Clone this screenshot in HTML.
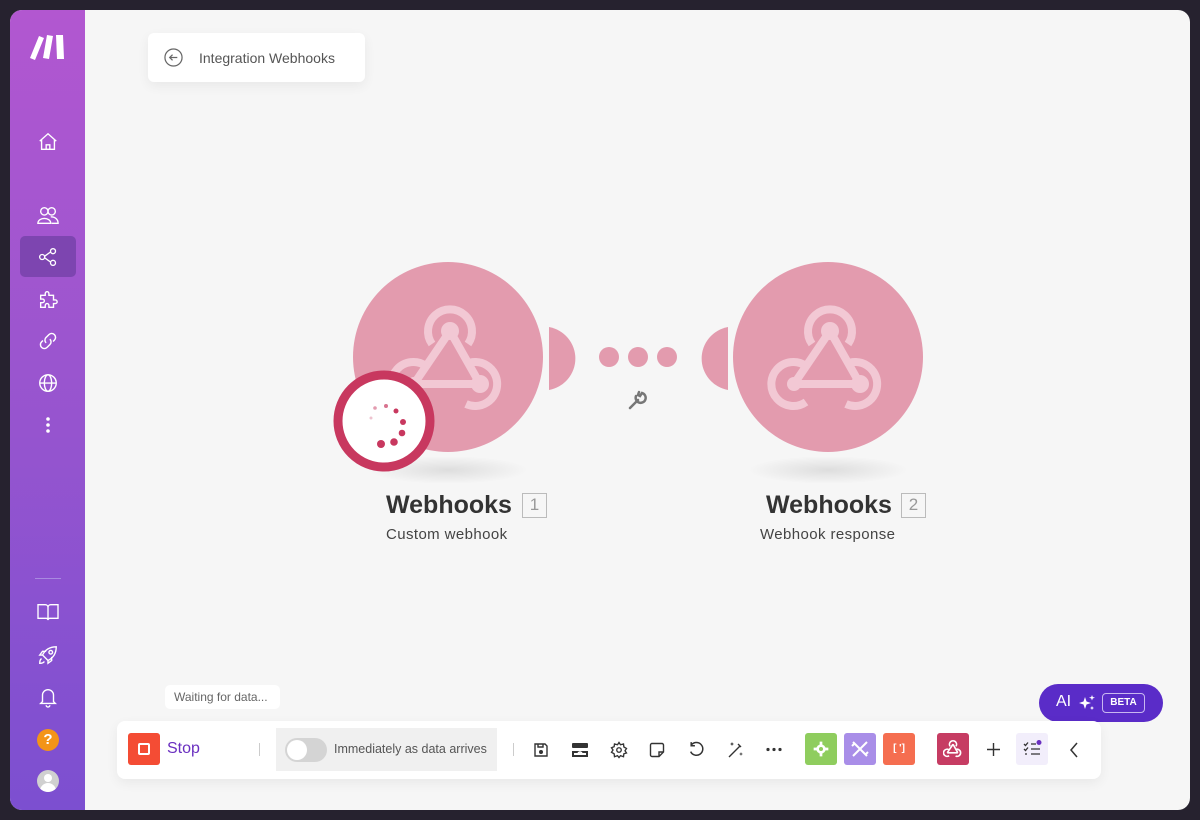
<!DOCTYPE html>
<html><head><meta charset="utf-8"><style>
*{margin:0;padding:0;box-sizing:border-box}
body{width:1200px;height:820px;background:#26222f;font-family:"Liberation Sans",sans-serif;position:relative;overflow:hidden}
.frame{position:absolute;left:10px;top:10px;width:1180px;height:800px;border-radius:12px;overflow:hidden;background:#f6f6f6}
.side{position:absolute;left:0;top:0;width:75px;height:800px;background:linear-gradient(180deg,#b257d0 0%,#9a55cf 45%,#7c4fd0 100%)}
.side svg{position:absolute}
.abs{position:absolute}
.t{position:absolute;white-space:nowrap}
.tb svg{position:absolute}
</style></head><body>
<div class="frame">
<div class="side">
 <svg style="left:20px;top:24px" width="36" height="26" viewBox="0 0 36 26"><path d="M0 24 L9 2 L14 4 L5 26Z M13 24 L17 1 L23 2 L19 25Z M26 1 L33 1 L34 25 L27 25Z" fill="#fff"/></svg>
 <svg style="left:27px;top:121px" width="22" height="22" viewBox="0 0 24 24" fill="none" stroke="#fff" stroke-width="1.5"><path d="M3 11 L12 3 L21 11 M5 9 V20 H19 V9 M10 20 V15 H14 V20"/></svg>
 <svg style="left:27px;top:194px" width="22" height="22" viewBox="0 0 24 24" fill="none" stroke="#fff" stroke-width="1.5"><circle cx="8" cy="8" r="4"/><circle cx="16" cy="8" r="4"/><path d="M1 21 C1 14 15 14 15 21 Z M15 14 C20 14 23 17 23 21 H16"/></svg>
 <div class="abs" style="left:10px;top:226px;width:56px;height:41px;background:#7d45b0;border-radius:5px"></div>
 <svg style="left:28px;top:237px" width="20" height="20" viewBox="0 0 24 24" fill="none" stroke="#fff" stroke-width="1.6"><circle cx="5" cy="12" r="3"/><circle cx="18" cy="5" r="3"/><circle cx="18" cy="19" r="3"/><path d="M8 11 L15 6 M8 13 L15 18"/></svg>
 <svg style="left:27px;top:278px" width="22" height="22" viewBox="0 0 24 24" fill="none" stroke="#fff" stroke-width="1.5"><path d="M4 8 H9 V6 a2 2 0 0 1 4 0 V8 H18 V13 H20 a2 2 0 0 1 0 4 H18 V21 H13 V19 a2 2 0 0 0 -4 0 V21 H4 V16 H6 a2 2 0 0 0 0 -4 H4Z"/></svg>
 <svg style="left:27px;top:320px" width="22" height="22" viewBox="0 0 24 24" fill="none" stroke="#fff" stroke-width="1.6"><path d="M10 14 a4 4 0 0 1 0-6 l3-3 a4 4 0 0 1 6 6 l-1.5 1.5 M14 10 a4 4 0 0 1 0 6 l-3 3 a4 4 0 0 1 -6-6 l1.5-1.5"/></svg>
 <svg style="left:27px;top:362px" width="22" height="22" viewBox="0 0 24 24" fill="none" stroke="#fff" stroke-width="1.5"><circle cx="12" cy="12" r="9"/><ellipse cx="12" cy="12" rx="4" ry="9"/><path d="M3 12 H21"/></svg>
 <svg style="left:35px;top:406px" width="6" height="18" viewBox="0 0 6 18" fill="#fff"><circle cx="3" cy="3" r="1.8"/><circle cx="3" cy="9" r="1.8"/><circle cx="3" cy="15" r="1.8"/></svg>
 <div class="abs" style="left:25px;top:568px;width:26px;height:1px;background:#a98ae0"></div>
 <svg style="left:27px;top:592px" width="22" height="20" viewBox="0 0 24 22" fill="none" stroke="#fff" stroke-width="1.5"><path d="M1 3 H9 a3 3 0 0 1 3 3 V20 a2 2 0 0 0 -2 -2 H1Z M23 3 H15 a3 3 0 0 0 -3 3 V20 a2 2 0 0 1 2 -2 H23Z"/></svg>
 <svg style="left:27px;top:634px" width="22" height="22" viewBox="0 0 24 24" fill="none" stroke="#fff" stroke-width="1.5"><path d="M9 15 L6 12 C9 6 14 3 21 3 C21 10 18 15 12 18Z M6 12 H3 L6 8 H10 M12 18 V21 L16 18 V14"/><circle cx="15" cy="9" r="2"/><path d="M5 16 C3 17 3 20 3 21 C4 21 7 21 8 19"/></svg>
 <svg style="left:27px;top:676px" width="22" height="22" viewBox="0 0 24 24" fill="none" stroke="#fff" stroke-width="1.5"><path d="M6 17 V10 a6 6 0 0 1 12 0 V17 L20 19 H4Z M10 21 a2 2 0 0 0 4 0"/></svg>
 <div class="abs" style="left:27px;top:719px;width:22px;height:22px;border-radius:50%;background:#f39418;color:#fff;font-weight:bold;font-size:15px;text-align:center;line-height:22px">?</div>
 <div class="abs" style="left:27px;top:760px;width:22px;height:22px;border-radius:50%;background:#d0d0d0;overflow:hidden"><div class="abs" style="left:7px;top:4px;width:8px;height:8px;border-radius:50%;background:#fff"></div><div class="abs" style="left:3px;top:13px;width:16px;height:12px;border-radius:8px 8px 0 0;background:#fff"></div></div>
</div>

<div class="abs" style="left:138px;top:23px;width:217px;height:49px;background:#fff;border-radius:6px;box-shadow:0 4px 12px rgba(0,0,0,.06)"></div>
<svg class="abs" style="left:154px;top:38px" width="19" height="19" viewBox="0 0 20 20" fill="none" stroke="#666" stroke-width="1.3"><circle cx="10" cy="10" r="9"/><path d="M14 10 H6 M9 7 L6 10 L9 13"/></svg>
<div class="t" style="left:189px;top:40px;font-size:14px;color:#555">Integration Webhooks</div>

<svg class="abs" style="left:0;top:0" width="1180" height="800">
 <defs>
  <radialGradient id="sh"><stop offset="0" stop-color="#000" stop-opacity=".1"/><stop offset="1" stop-color="#000" stop-opacity="0"/></radialGradient>
  <g id="wh" fill="none" stroke="#f2c8d4" stroke-width="8">
   <path d="M-18 -14 A22 22 0 1 1 18 -14"/>
   <path d="M-24 8 A22 22 0 1 0 -24 44"/>
   <path d="M16 46 A22 22 0 1 0 16 6"/>
   <path d="M0 -27 L-36 26 M0 -27 L30 26 M-36 26 H30"/>
   <circle cx="0" cy="-27" r="9" fill="#f2c8d4" stroke="none"/>
   <circle cx="30" cy="26" r="9" fill="#f2c8d4" stroke="none"/>
   <circle cx="-36" cy="26" r="7" fill="#f2c8d4" stroke="none"/>
  </g>
 </defs>
 <ellipse cx="438" cy="460" rx="80" ry="14" fill="url(#sh)"/>
 <ellipse cx="818" cy="460" rx="80" ry="14" fill="url(#sh)"/>
 <circle cx="438" cy="347" r="95" fill="#e39bae"/>
 <circle cx="818" cy="347" r="95" fill="#e39bae"/>
 <use href="#wh" x="440" y="348"/>
 <use href="#wh" x="820" y="348"/>
 <path d="M539 317 A32 32 0 0 1 539 380 Z" fill="#e39bae"/>
 <path d="M718 317 A32 32 0 0 0 718 380 Z" fill="#e39bae"/>
 <circle cx="599" cy="347" r="10" fill="#e39bae"/><circle cx="628" cy="347" r="10" fill="#e39bae"/><circle cx="657" cy="347" r="10" fill="#e39bae"/>
 <path d="M620 398 L628 390 M626 386 a5 5 0 1 0 6 -3 l-2 3 -2 -1 1-3" stroke="#777" stroke-width="2.5" fill="none" stroke-linecap="round"/>
 <circle cx="374" cy="411" r="46" fill="#fff" stroke="#c8385f" stroke-width="9"/>
 <g fill="#c8385f"><circle cx="386" cy="401" r="2.5"/><circle cx="393" cy="412" r="3"/><circle cx="392" cy="423" r="3.3"/><circle cx="384" cy="432" r="3.8"/><circle cx="371" cy="434" r="4"/><circle cx="376" cy="396" r="2" opacity=".7"/><circle cx="365" cy="398" r="1.8" opacity=".5"/><circle cx="361" cy="408" r="1.5" opacity=".3"/></g>
</svg>

<div class="t" style="left:376px;top:481px;font-size:25px;font-weight:bold;color:#333">Webhooks</div>
<div class="abs" style="left:512px;top:483px;width:25px;height:25px;border:1.5px solid #bbb;color:#999;font-size:17px;text-align:center;line-height:22px">1</div>
<div class="t" style="left:376px;top:516px;font-size:15px;color:#444;letter-spacing:.4px">Custom webhook</div>
<div class="t" style="left:756px;top:481px;font-size:25px;font-weight:bold;color:#333">Webhooks</div>
<div class="abs" style="left:891px;top:483px;width:25px;height:25px;border:1.5px solid #bbb;color:#999;font-size:17px;text-align:center;line-height:22px">2</div>
<div class="t" style="left:750px;top:516px;font-size:15px;color:#444;letter-spacing:.4px">Webhook response</div>

<div class="abs" style="left:155px;top:675px;width:115px;height:24px;background:#fff;border-radius:5px"></div>
<div class="t" style="left:164px;top:680px;font-size:12px;color:#666">Waiting for data...</div>

<div class="abs" style="left:1029px;top:674px;width:124px;height:38px;border-radius:19px;background:#5a2cc8"></div>
<div class="t" style="left:1046px;top:683px;font-size:16px;color:#fff">AI</div>
<svg class="abs" style="left:1068px;top:684px" width="18" height="18" viewBox="0 0 18 18" fill="#fff"><path d="M7 3 L8.5 7.5 L13 9 L8.5 10.5 L7 15 L5.5 10.5 L1 9 L5.5 7.5Z M14 1 L14.8 3 L17 3.7 L14.8 4.4 L14 6.5 L13.2 4.4 L11 3.7 L13.2 3Z M14 12 L14.6 13.4 L16 14 L14.6 14.6 L14 16 L13.4 14.6 L12 14 L13.4 13.4Z"/></svg>
<div class="abs" style="left:1092px;top:683px;width:43px;height:20px;border:1.5px solid #c8b7f0;border-radius:4px;color:#fff;font-size:10px;font-weight:bold;text-align:center;line-height:17px">BETA</div>

<div class="tb abs" style="left:107px;top:711px;width:984px;height:58px;background:#fff;border-radius:8px;box-shadow:0 4px 12px rgba(0,0,0,.06)">
 <div class="abs" style="left:11px;top:12px;width:32px;height:32px;background:#f44c34;border-radius:3px"><div class="abs" style="left:10px;top:10px;width:12px;height:12px;border:2px solid #fff;border-radius:2px"></div></div>
 <div class="t" style="left:50px;top:19px;font-size:16px;color:#6a2fc0">Stop</div>
 <div class="abs" style="left:142px;top:22px;width:1px;height:13px;background:#ccc"></div>
 <div class="abs" style="left:159px;top:7px;width:221px;height:43px;background:#f0f0f0"></div>
 <div class="abs" style="left:168px;top:17px;width:42px;height:24px;border-radius:12px;background:#d4d4d4"><div class="abs" style="left:2px;top:2px;width:20px;height:20px;border-radius:50%;background:#fff"></div></div>
 <div class="t" style="left:217px;top:21px;font-size:12.5px;color:#555">Immediately as data arrives</div>
 <div class="abs" style="left:396px;top:22px;width:1px;height:13px;background:#ccc"></div>
 <svg style="left:416px;top:21px" width="16" height="16" viewBox="0 0 16 16" fill="none" stroke="#333" stroke-width="1.4"><path d="M2 2 H12 L14 4 V14 H2Z M5 2 V5 H10 V2"/><circle cx="8" cy="10" r="1.3" fill="#333"/></svg>
 <svg style="left:454px;top:21px" width="18" height="16" viewBox="0 0 18 16" fill="#333"><rect x="1" y="1" width="16" height="5" rx="1"/><path d="M1 9 H17 V15 H1Z M3 11 V13 H15 V11Z" /><path d="M9 6 V12 M7 10 L9 12 L11 10" stroke="#fff" stroke-width="1.4" fill="none"/></svg>
 <svg style="left:493px;top:20px" width="18" height="18" viewBox="0 0 24 24" fill="none" stroke="#333" stroke-width="1.8"><circle cx="12" cy="12" r="3"/><path d="M12 2 L14 5 L18 4 L18.5 8 L22 10 L20 13 L22 16 L18.5 17 L18 21 L14 19.5 L12 22 L10 19.5 L6 21 L5.5 17 L2 15 L4 12 L2 9 L5.5 7.5 L6 4 L10 5Z"/></svg>
 <svg style="left:532px;top:21px" width="16" height="16" viewBox="0 0 16 16" fill="none" stroke="#333" stroke-width="1.4"><path d="M3 1.5 H13 a1.5 1.5 0 0 1 1.5 1.5 V10 L10 14.5 H3 a1.5 1.5 0 0 1 -1.5 -1.5 V3 a1.5 1.5 0 0 1 1.5-1.5Z M10 14.5 V10 H14.5"/></svg>
 <svg style="left:571px;top:20px" width="17" height="17" viewBox="0 0 16 16" fill="none" stroke="#333" stroke-width="1.4"><path d="M3 4 A6 6 0 1 1 2.5 10 M3 1 V4.5 H6.5"/></svg>
 <svg style="left:609px;top:20px" width="18" height="18" viewBox="0 0 18 18" fill="none" stroke="#333" stroke-width="1.4"><path d="M3 16 L14 5 M12 3 L15 6"/><path d="M6 1 L6.6 2.4 L8 3 L6.6 3.6 L6 5 L5.4 3.6 L4 3 L5.4 2.4Z M15 11 L15.5 12.5 L17 13 L15.5 13.5 L15 15 L14.5 13.5 L13 13 L14.5 12.5Z" fill="#333" stroke="none"/></svg>
 <svg style="left:649px;top:26px" width="16" height="5" viewBox="0 0 16 5" fill="#333"><circle cx="2" cy="2.5" r="1.6"/><circle cx="8" cy="2.5" r="1.6"/><circle cx="14" cy="2.5" r="1.6"/></svg>
 <div class="abs" style="left:688px;top:12px;width:32px;height:32px;background:#8fcd5e;border-radius:3px"></div>
 <svg style="left:696px;top:20px" width="16" height="16" viewBox="0 0 24 24" fill="#fff"><circle cx="12" cy="12" r="7"/><path d="M10 1 H14 V6 H10Z M10 18 H14 V23 H10Z M1 10 H6 V14 H1Z M18 10 H23 V14 H18Z"/><circle cx="12" cy="12" r="3" fill="#8fcd5e"/></svg>
 <div class="abs" style="left:727px;top:12px;width:32px;height:32px;background:#a98ee8;border-radius:3px"></div>
 <svg style="left:734px;top:19px" width="18" height="18" viewBox="0 0 18 18" fill="none" stroke="#fff" stroke-width="2"><path d="M2 2 L16 16 M16 2 L2 16 M1 6 L4 3 M14 15 L17 12"/></svg>
 <div class="abs" style="left:766px;top:12px;width:32px;height:32px;background:#f56e50;border-radius:3px;color:#fff;font-size:10px;font-weight:bold;text-align:center;line-height:32px">[ ']</div>
 <div class="abs" style="left:820px;top:12px;width:32px;height:32px;background:#c63c63;border-radius:3px"></div>
 <svg style="left:826px;top:18px" width="20" height="20" viewBox="-62 -55 124 115" fill="none" stroke="#fff" stroke-width="10"><path d="M-18 -14 A22 22 0 1 1 18 -14 M-24 8 A22 22 0 1 0 -24 44 M16 46 A22 22 0 1 0 16 6 M0 -27 L-36 26 M0 -27 L30 26 M-36 26 H30"/></svg>
 <svg style="left:869px;top:21px" width="15" height="15" viewBox="0 0 15 15" stroke="#333" stroke-width="1.4"><path d="M7.5 1 V14 M1 7.5 H14"/></svg>
 <div class="abs" style="left:899px;top:12px;width:32px;height:32px;background:#f2eefb;border-radius:3px"></div>
 <svg style="left:906px;top:19px" width="19" height="17" viewBox="0 0 19 17" fill="none" stroke="#333" stroke-width="1.3"><path d="M1 4 L2.5 5.5 L5 2.5 M8 4 H13 M1 9 L2.5 10.5 L5 7.5 M8 9 H17 M2 14 H4 M8 14 H17"/><circle cx="16" cy="2.5" r="2.5" fill="#6a2fc0" stroke="none"/></svg>
 <svg style="left:952px;top:21px" width="10" height="16" viewBox="0 0 10 16" fill="none" stroke="#333" stroke-width="1.5"><path d="M8 1 L2 8 L8 15"/></svg>
</div>
</div>
</body></html>
